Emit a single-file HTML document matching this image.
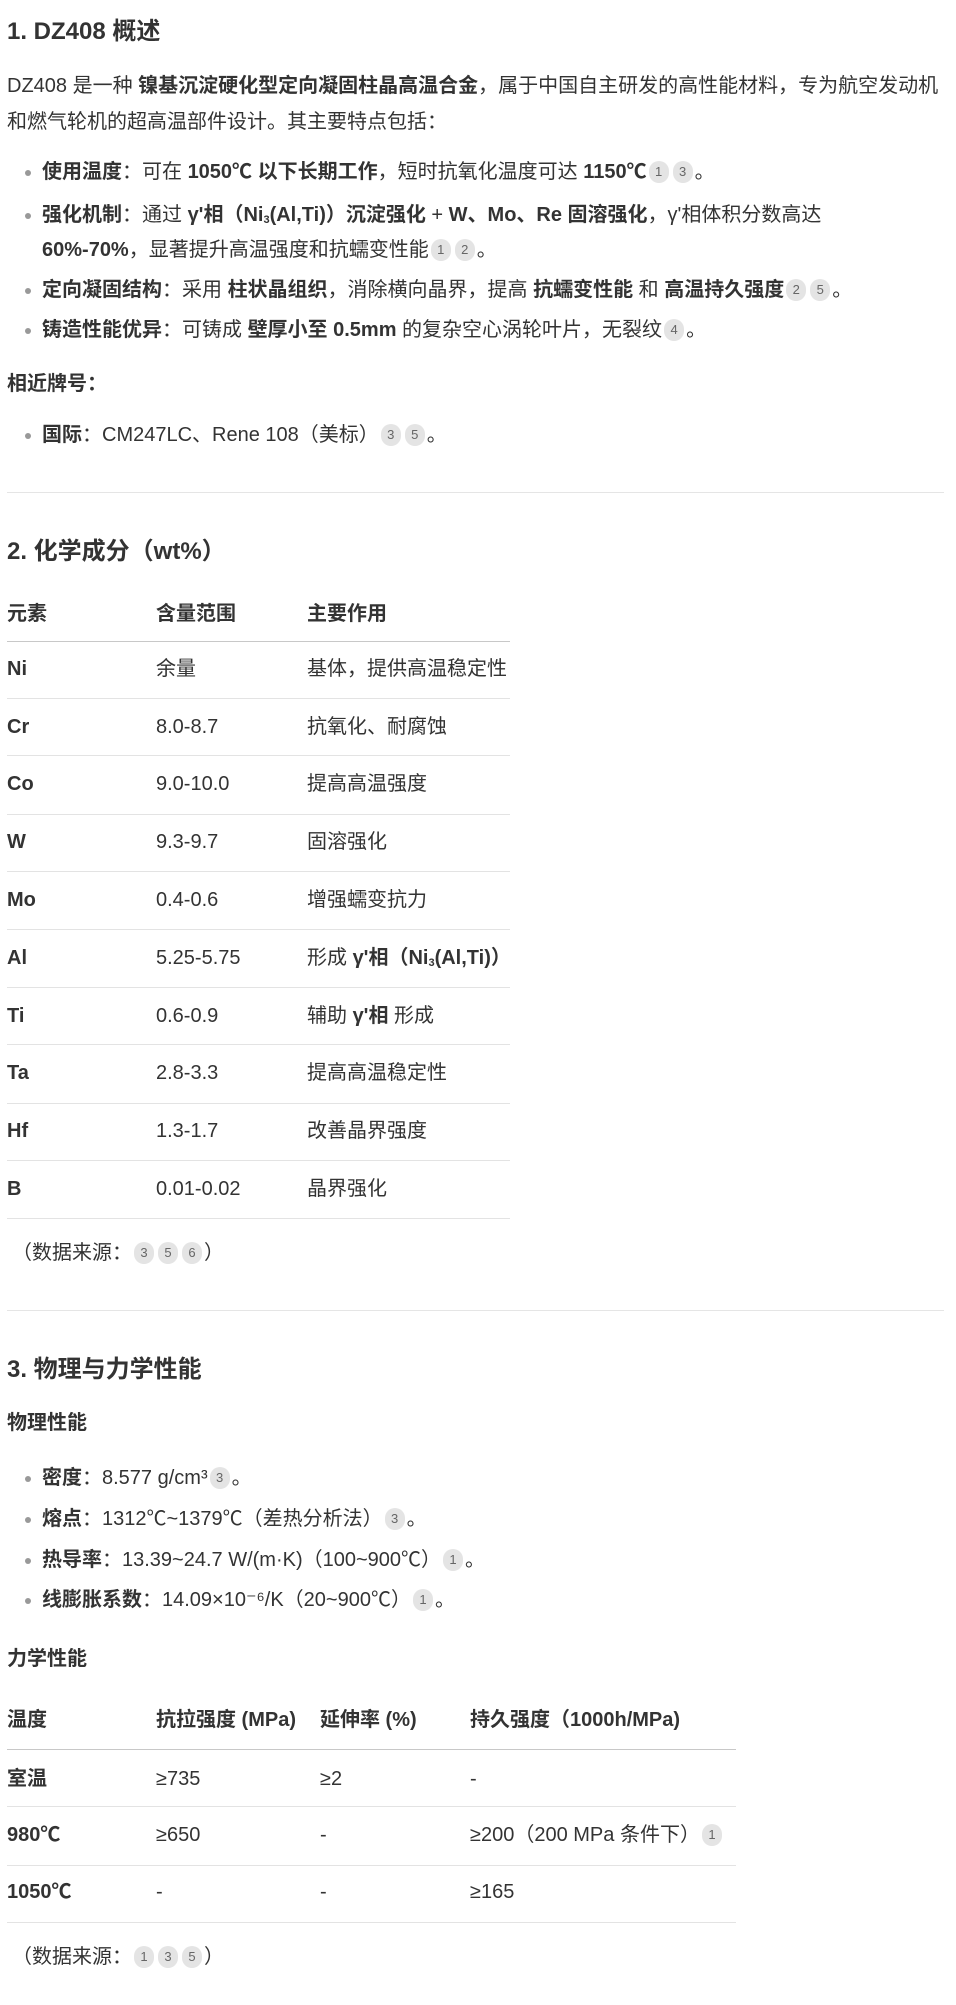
<!DOCTYPE html>
<html><head><meta charset="utf-8"><style>
body{margin:0;background:#fff;width:956px;height:2005px;position:relative;overflow:hidden;font-family:"Liberation Sans","Noto Sans CJK SC",sans-serif;color:#333;font-size:20px}
.l{position:absolute;left:7px;height:30px;line-height:30px;white-space:nowrap}
.b{left:42px}
.b:before{content:"";position:absolute;left:-17px;top:13px;width:6px;height:6px;border-radius:50%;background:#999}
.h{font-size:24px;font-weight:bold}
.s{font-size:20px;font-weight:bold}
.c{display:inline-block;min-width:20px;height:22px;line-height:22px;border-radius:11px;background:#e4e4e4;color:#666;font-size:13px;text-align:center;margin:0 2px;vertical-align:2px}
.hr{position:absolute;left:7px;width:937px;height:1px;background:#e5e5e5}
.tl{position:absolute;left:7px;height:1px;background:#e3e3e3}
.cell{position:absolute;height:30px;line-height:30px;white-space:nowrap}
b{font-weight:bold}
sub{font-size:11px;vertical-align:-2px}
</style></head><body>
<div class="l h" style="top:17px">1. DZ408 概述</div>
<div class="l" style="top:71px">DZ408 是一种 <b>镍基沉淀硬化型定向凝固柱晶高温合金</b>，属于中国自主研发的高性能材料，专为航空发动机</div>
<div class="l" style="top:107px">和燃气轮机的超高温部件设计。其主要特点包括：</div>
<div class="l b" style="top:157px"><b>使用温度</b>：可在 <b>1050℃ 以下长期工作</b>，短时抗氧化温度可达 <b>1150℃</b><span class="c">1</span><span class="c">3</span>。</div>
<div class="l b" style="top:200px"><b>强化机制</b>：通过 <b>γ'相（Ni<sub>3</sub>(Al,Ti)）沉淀强化</b> + <b>W、Mo、Re 固溶强化</b>，γ'相体积分数高达</div>
<div class="l" style="top:235px;left:42px"><b>60%-70%</b>，显著提升高温强度和抗蠕变性能<span class="c">1</span><span class="c">2</span>。</div>
<div class="l b" style="top:275px"><b>定向凝固结构</b>：采用 <b>柱状晶组织</b>，消除横向晶界，提高 <b>抗蠕变性能</b> 和 <b>高温持久强度</b><span class="c">2</span><span class="c">5</span>。</div>
<div class="l b" style="top:315px"><b>铸造性能优异</b>：可铸成 <b>壁厚小至 0.5mm</b> 的复杂空心涡轮叶片，无裂纹<span class="c">4</span>。</div>
<div class="l s" style="top:369px">相近牌号：</div>
<div class="l b" style="top:420px"><b>国际</b>：CM247LC、Rene 108（美标）<span class="c">3</span><span class="c">5</span>。</div>
<div class="hr" style="top:492px"></div>

<div class="l h" style="top:537px">2. 化学成分（wt%）</div>
<div class="cell" style="top:599px;left:7px"><b>元素</b></div><div class="cell" style="top:599px;left:156px"><b>含量范围</b></div><div class="cell" style="top:599px;left:307px"><b>主要作用</b></div>
<div class="tl" style="top:641px;width:503px;background:#c8c8c8"></div>
<div class="cell" style="top:654px;left:7px"><b>Ni</b></div><div class="cell" style="top:654px;left:156px">余量</div><div class="cell" style="top:654px;left:307px">基体，提供高温稳定性</div>
<div class="tl" style="top:698px;width:503px"></div>
<div class="cell" style="top:712px;left:7px"><b>Cr</b></div><div class="cell" style="top:712px;left:156px">8.0-8.7</div><div class="cell" style="top:712px;left:307px">抗氧化、耐腐蚀</div>
<div class="tl" style="top:755px;width:503px"></div>
<div class="cell" style="top:769px;left:7px"><b>Co</b></div><div class="cell" style="top:769px;left:156px">9.0-10.0</div><div class="cell" style="top:769px;left:307px">提高高温强度</div>
<div class="tl" style="top:814px;width:503px"></div>
<div class="cell" style="top:827px;left:7px"><b>W</b></div><div class="cell" style="top:827px;left:156px">9.3-9.7</div><div class="cell" style="top:827px;left:307px">固溶强化</div>
<div class="tl" style="top:871px;width:503px"></div>
<div class="cell" style="top:885px;left:7px"><b>Mo</b></div><div class="cell" style="top:885px;left:156px">0.4-0.6</div><div class="cell" style="top:885px;left:307px">增强蠕变抗力</div>
<div class="tl" style="top:929px;width:503px"></div>
<div class="cell" style="top:943px;left:7px"><b>Al</b></div><div class="cell" style="top:943px;left:156px">5.25-5.75</div><div class="cell" style="top:943px;left:307px">形成 <b>γ'相（Ni<sub>3</sub>(Al,Ti)）</b></div>
<div class="tl" style="top:987px;width:503px"></div>
<div class="cell" style="top:1001px;left:7px"><b>Ti</b></div><div class="cell" style="top:1001px;left:156px">0.6-0.9</div><div class="cell" style="top:1001px;left:307px">辅助 <b>γ'相</b> 形成</div>
<div class="tl" style="top:1044px;width:503px"></div>
<div class="cell" style="top:1058px;left:7px"><b>Ta</b></div><div class="cell" style="top:1058px;left:156px">2.8-3.3</div><div class="cell" style="top:1058px;left:307px">提高高温稳定性</div>
<div class="tl" style="top:1103px;width:503px"></div>
<div class="cell" style="top:1116px;left:7px"><b>Hf</b></div><div class="cell" style="top:1116px;left:156px">1.3-1.7</div><div class="cell" style="top:1116px;left:307px">改善晶界强度</div>
<div class="tl" style="top:1160px;width:503px"></div>
<div class="cell" style="top:1174px;left:7px"><b>B</b></div><div class="cell" style="top:1174px;left:156px">0.01-0.02</div><div class="cell" style="top:1174px;left:307px">晶界强化</div>
<div class="tl" style="top:1218px;width:503px"></div>
<div class="l" style="top:1238px;left:12px">（数据来源：<span class="c">3</span><span class="c">5</span><span class="c">6</span>）</div>
<div class="hr" style="top:1310px"></div>

<div class="l h" style="top:1355px">3. 物理与力学性能</div>
<div class="l s" style="top:1408px">物理性能</div>
<div class="l b" style="top:1463px"><b>密度</b>：8.577 g/cm³<span class="c">3</span>。</div>
<div class="l b" style="top:1504px"><b>熔点</b>：1312℃~1379℃（差热分析法）<span class="c">3</span>。</div>
<div class="l b" style="top:1545px"><b>热导率</b>：13.39~24.7 W/(m·K)（100~900℃）<span class="c">1</span>。</div>
<div class="l b" style="top:1585px"><b>线膨胀系数</b>：14.09×10⁻⁶/K（20~900℃）<span class="c">1</span>。</div>
<div class="l s" style="top:1644px">力学性能</div>
<div class="cell" style="top:1705px;left:7px"><b>温度</b></div><div class="cell" style="top:1705px;left:156px"><b>抗拉强度 (MPa)</b></div><div class="cell" style="top:1705px;left:320px"><b>延伸率 (%)</b></div><div class="cell" style="top:1705px;left:470px"><b>持久强度（1000h/MPa)</b></div>
<div class="tl" style="top:1749px;width:729px;background:#c8c8c8"></div>
<div class="cell" style="top:1764px;left:7px"><b>室温</b></div><div class="cell" style="top:1764px;left:156px">≥735</div><div class="cell" style="top:1764px;left:320px">≥2</div><div class="cell" style="top:1764px;left:470px">-</div>
<div class="tl" style="top:1806px;width:729px"></div>
<div class="cell" style="top:1820px;left:7px"><b>980℃</b></div><div class="cell" style="top:1820px;left:156px">≥650</div><div class="cell" style="top:1820px;left:320px">-</div><div class="cell" style="top:1820px;left:470px">≥200（200 MPa 条件下）<span class="c">1</span></div>
<div class="tl" style="top:1865px;width:729px"></div>
<div class="cell" style="top:1877px;left:7px"><b>1050℃</b></div><div class="cell" style="top:1877px;left:156px">-</div><div class="cell" style="top:1877px;left:320px">-</div><div class="cell" style="top:1877px;left:470px">≥165</div>
<div class="tl" style="top:1922px;width:729px"></div>
<div class="l" style="top:1942px;left:12px">（数据来源：<span class="c">1</span><span class="c">3</span><span class="c">5</span>）</div>
</body></html>
